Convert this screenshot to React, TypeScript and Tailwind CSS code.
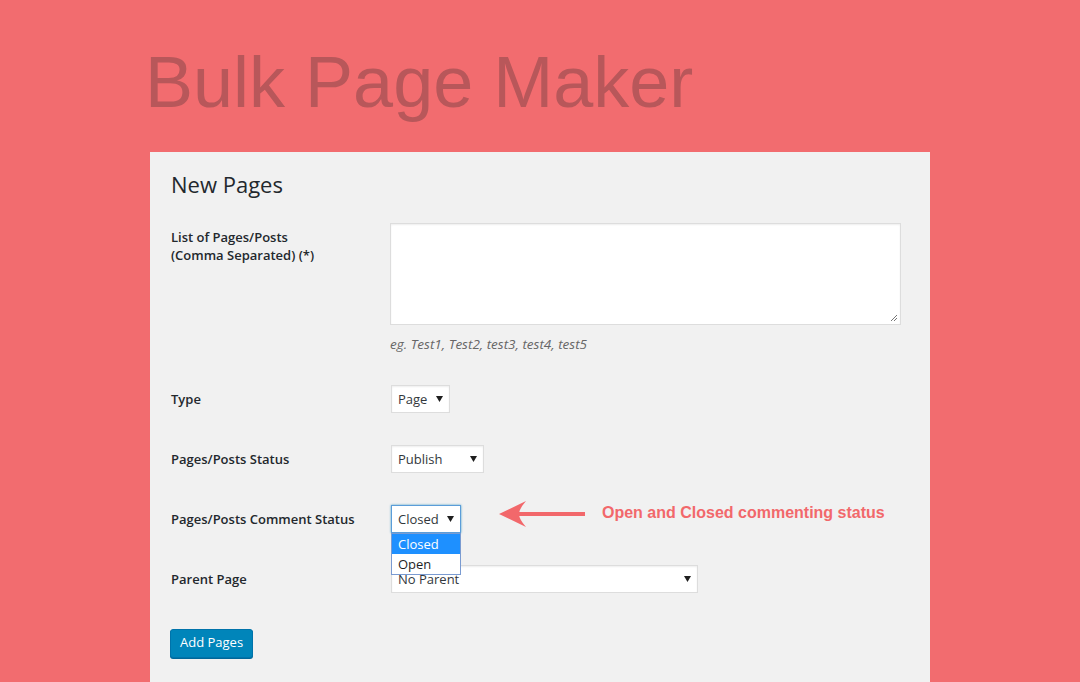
import React from "react";

type SelectProps = {
  value: string;
  width: string;
  focused?: boolean;
};

function Caret() {
  return (
    <svg width="7" height="6" viewBox="0 0 7 6" className="shrink-0">
      <polygon points="0,0 7,0 3.5,6" fill="#1f1f1f" />
    </svg>
  );
}

function FakeSelect({ value, width, focused }: SelectProps) {
  return (
    <div
      className={`ml-px flex h-[28px] items-center justify-between bg-white pl-[6px] pr-[6px] text-[13px] text-[#32373c] ${width} ${
        focused
          ? "border border-[#5b9dd9] shadow-[0_0_2px_rgba(30,140,190,0.8)]"
          : "border border-[#dddddd] shadow-[inset_0_1px_2px_rgba(0,0,0,0.07)]"
      }`}
    >
      <span className="pt-[2px]">{value}</span>
      <Caret />
    </div>
  );
}

function Label({ children }: { children: React.ReactNode }) {
  return (
    <div className="w-[219px] shrink-0 text-[13px] font-semibold leading-[18px] text-[#23282d]">
      {children}
    </div>
  );
}

function ArrowLeft() {
  return (
    <svg width="86" height="26" viewBox="0 0 86 26" className="shrink-0">
      <path d="M0 13 L27 0 Q20 8 20 13 Q20 18 27 26 Z" fill="#f2686b" />
      <rect x="19" y="11" width="67" height="4" fill="#f2686b" />
    </svg>
  );
}

export default function App() {
  return (
    <div
      className="flex h-[682px] w-[1080px] flex-col overflow-hidden bg-[#f26c6f]"
      style={{ fontFamily: '"Open Sans", "Noto Sans", sans-serif' }}
    >
      <h1 className="ml-[145px] mt-[46px] font-['Liberation_Sans',Arial,sans-serif] text-[72px] font-normal leading-none text-[#b8575a]">
        Bulk Page Maker
      </h1>

      <div className="ml-[150px] mt-[34px] w-[780px] flex-1 bg-[#f1f1f1] pl-[21px] pt-[18px]">
        <h2 className="text-[22px] font-normal leading-[1.3] text-[#23282d]">New Pages</h2>

        {/* pages list */}
        <div className="mt-[24px] flex items-start">
          <div className="pt-[5px]">
            <Label>
              List of Pages/Posts
              <br />
              (Comma Separated) (*)
            </Label>
          </div>
          <div className="flex flex-col">
            <div className="relative h-[102px] w-[511px] border border-[#dddddd] bg-white shadow-[inset_0_1px_2px_rgba(0,0,0,0.07)]">
              <svg width="8" height="8" viewBox="0 0 8 8" className="absolute bottom-[2px] right-[2px]">
                <line x1="1" y1="7" x2="7" y2="1" stroke="#777" strokeWidth="1" />
                <line x1="4" y1="7" x2="7" y2="4" stroke="#777" strokeWidth="1" />
              </svg>
            </div>
            <p className="mt-[10px] text-[13.5px] italic leading-[18px] text-[#666666]">
              eg. Test1, Test2, test3, test4, test5
            </p>
          </div>
        </div>

        {/* type */}
        <div className="mt-[32px] flex items-center">
          <Label>Type</Label>
          <FakeSelect value="Page" width="w-[59px]" />
        </div>

        {/* status */}
        <div className="mt-[32px] flex items-center">
          <Label>Pages/Posts Status</Label>
          <FakeSelect value="Publish" width="w-[93px]" />
        </div>

        {/* comment status */}
        <div className="relative z-10 mt-[32px] flex items-center">
          <Label>Pages/Posts Comment Status</Label>
          <div className="relative">
            <FakeSelect value="Closed" width="w-[70px]" focused />
            <div className="absolute left-px top-[28px] w-[70px] border border-[#7a9bd1] bg-white text-[13px] leading-[20px]">
              <div className="bg-[#1e90ff] pl-[6px] text-white">Closed</div>
              <div className="pl-[6px] text-[#1f1f1f]">Open</div>
            </div>
          </div>
          <div className="-mt-[10px] ml-[38px] flex items-center">
            <ArrowLeft />
          </div>
          <span className="-mt-[12px] ml-[17px] font-['Liberation_Sans',Arial,sans-serif] text-[16px] font-bold text-[#f2686b]">
            Open and Closed commenting status
          </span>
        </div>

        {/* parent */}
        <div className="mt-[32px] flex items-center">
          <Label>Parent Page</Label>
          <FakeSelect value="No Parent" width="w-[307px]" />
        </div>

        <button className="-ml-px mt-[36px] h-[29px] rounded-[3px] border border-[#0073aa] bg-[#0085ba] px-[9px] text-[13px] text-white shadow-[0_1px_0_#006799]">
          Add Pages
        </button>
      </div>
    </div>
  );
}
